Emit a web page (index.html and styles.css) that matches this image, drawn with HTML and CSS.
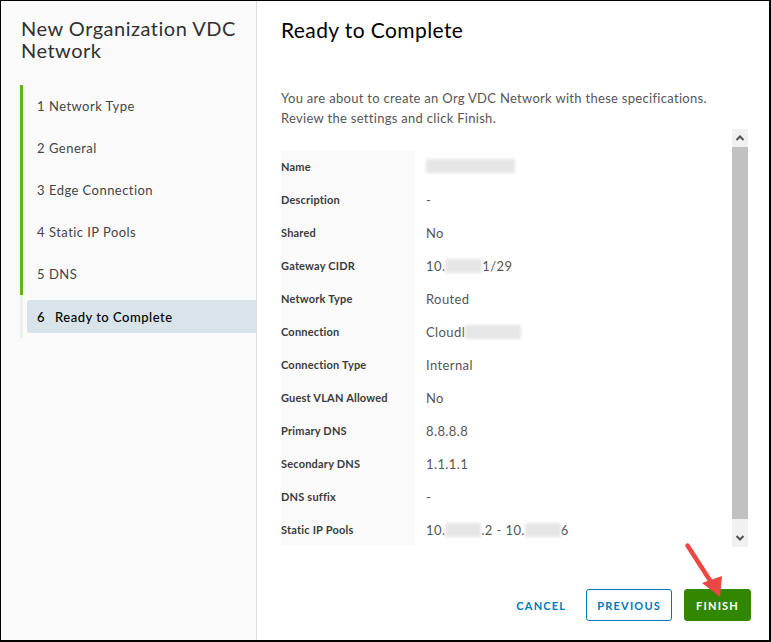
FILE: index.html
```html
<!DOCTYPE html>
<html>
<head>
<meta charset="utf-8">
<link rel="stylesheet" href="styles.css">
</head>
<body>
<div class="frame">
  <aside class="sidebar">
    <h1 class="wizard-title">New Organization VDC Network</h1>
    <ol class="steps">
      <li class="step done"><span class="num">1</span>Network Type</li>
      <li class="step done"><span class="num">2</span>General</li>
      <li class="step done"><span class="num">3</span>Edge Connection</li>
      <li class="step done"><span class="num">4</span>Static IP Pools</li>
      <li class="step done"><span class="num">5</span>DNS</li>
      <li class="step active"><div class="step-inner"><span class="num">6</span>Ready to Complete</div></li>
    </ol>
  </aside>
  <main class="content">
    <h2 class="page-title">Ready to Complete</h2>
    <p class="intro">You are about to create an Org VDC Network with these specifications.<br>Review the settings and click Finish.</p>
    <div class="summary">
      <div class="summary-body">
        <dl class="specs">
          <div class="row"><dt>Name</dt><dd><span class="blur w89"></span></dd></div>
          <div class="row"><dt>Description</dt><dd>-</dd></div>
          <div class="row"><dt>Shared</dt><dd>No</dd></div>
          <div class="row"><dt>Gateway CIDR</dt><dd>10.<span class="blur w37"></span>1/29</dd></div>
          <div class="row"><dt>Network Type</dt><dd>Routed</dd></div>
          <div class="row"><dt>Connection</dt><dd>Cloudl<span class="blur w56"></span></dd></div>
          <div class="row"><dt>Connection Type</dt><dd>Internal</dd></div>
          <div class="row"><dt>Guest VLAN Allowed</dt><dd>No</dd></div>
          <div class="row"><dt>Primary DNS</dt><dd>8.8.8.8</dd></div>
          <div class="row"><dt>Secondary DNS</dt><dd>1.1.1.1</dd></div>
          <div class="row"><dt>DNS suffix</dt><dd>-</dd></div>
          <div class="row"><dt>Static IP Pools</dt><dd>10.<span class="blur w36"></span>.2 - 10.<span class="blur w36"></span>6</dd></div>
        </dl>
      </div>
      <div class="scrollbar">
        <div class="sb-btn"><svg width="16" height="18" viewBox="0 0 16 18"><path d="M4.5 11 L8 7.5 L11.5 11" fill="none" stroke="#505050" stroke-width="2"/></svg></div>
        <div class="sb-track"><div class="sb-thumb"></div></div>
        <div class="sb-btn"><svg width="16" height="18" viewBox="0 0 16 18"><path d="M4.5 7 L8 10.5 L11.5 7" fill="none" stroke="#505050" stroke-width="2"/></svg></div>
      </div>
    </div>
    <footer class="actions">
      <button class="btn btn-link">CANCEL</button>
      <button class="btn btn-outline">PREVIOUS</button>
      <button class="btn btn-success">FINISH</button>
    </footer>
  </main>
  <svg class="callout" width="771" height="642" viewBox="0 0 771 642">
    <line x1="687.5" y1="545.5" x2="711" y2="582" stroke="#ec4843" stroke-width="4.5" stroke-linecap="round"/>
    <polygon points="702,583 722,576 720,597" fill="#ec4843"/>
  </svg>
</div>
</body>
</html>
```
FILE: styles.css
```css
* { box-sizing: border-box; }
html, body { margin: 0; padding: 0; background: #fff; }
body { font-family: "Lato", "Noto Sans", sans-serif; color: #565656; }

.frame {
  position: relative;
  width: 771px;
  height: 642px;
  border-top: 1px solid #000;
  border-left: 1px solid #000;
  border-right: 2px solid #000;
  border-bottom: 2px solid #000;
  display: flex;
  overflow: hidden;
}

.sidebar {
  width: 256px;
  flex: none;
  background: #fafafa;
  border-right: 1px solid #ddd;
  padding: 16px 0 0 19px;
}

.wizard-title {
  margin: 0;
  font-size: 20px;
  font-weight: 400;
  line-height: 22px;
  letter-spacing: 0.5px;
  color: #313131;
  padding-left: 1px;
}

.steps {
  list-style: none;
  margin: 24px 0 0 0;
  padding: 0;
}

.step {
  height: 42px;
  border-left: 3px solid #60b515;
  display: flex;
  align-items: center;
  padding-left: 14px;
  font-size: 13px;
  letter-spacing: 0.45px;
  color: #454545;
}
.step .num { margin-right: 4px; }

.step.active {
  border-left-color: #eee;
  padding: 5px 0 5px 4px;
  align-items: stretch;
  height: 43px;
}
.step-inner {
  flex: 1;
  background: #d9e4ea;
  border-radius: 3px 0 0 3px;
  display: flex;
  align-items: center;
  padding-left: 10px;
  color: #000;
  font-weight: 500;
  letter-spacing: 0.5px;
}
.step-inner .num { margin-right: 10px; }

.content {
  flex: 1;
  padding: 16px 18px 0 24px;
  display: flex;
  flex-direction: column;
}

.page-title {
  margin: 0;
  font-size: 21px;
  font-weight: 400;
  line-height: 26px;
  letter-spacing: 0.4px;
  color: #000;
}

.intro {
  margin: 45px 0 0 0;
  font-size: 13px;
  line-height: 20px;
  letter-spacing: 0.3px;
  color: #565656;
}

.summary {
  margin-top: 1px;
  margin-right: 3px;
  height: 418px;
  display: flex;
}

.summary-body {
  flex: 1;
  padding-top: 21px;
  overflow: hidden;
}

.specs { margin: 0; }
.specs .row {
  display: flex;
  height: 33px;
}
.specs dt {
  width: 134px;
  flex: none;
  background: #fafafa;
  font-size: 11px;
  font-weight: 700;
  letter-spacing: 0.2px;
  color: #3a3a3a;
  display: flex;
  align-items: center;
}
.specs dd {
  margin: 0;
  padding: 1px 0 0 11px;
  font-size: 13px;
  letter-spacing: 0.4px;
  color: #565656;
  display: flex;
  align-items: center;
}

.blur {
  display: inline-block;
  height: 14px;
  background: #e6e6e6;
  filter: blur(1.5px);
}
.w89 { width: 89px; margin-top: -2px; }
.w37 { width: 37px; }
.w56 { width: 56px; }
.w36 { width: 36px; }

.scrollbar {
  width: 16px;
  flex: none;
  display: flex;
  flex-direction: column;
  background: #f1f1f1;
}
.sb-btn { height: 18px; flex: none; display: flex; }
.sb-track { flex: 1; padding-bottom: 10px; }
.sb-thumb { height: 100%; background: #c1c1c1; }

.actions {
  margin-top: 42px;
  display: flex;
  justify-content: flex-end;
  align-items: center;
  gap: 12px;
}

.btn {
  font-family: "Lato", "Noto Sans", sans-serif;
  font-size: 11px;
  font-weight: 700;
  letter-spacing: 1.2px;
  height: 32px;
  border-radius: 3px;
  padding: 0 11px;
  cursor: pointer;
}
.btn-link {
  border: none;
  background: none;
  color: #0079b8;
  padding-right: 8px;
}
.btn-outline {
  border: 1px solid #0079b8;
  background: #fff;
  color: #0079b8;
  padding: 0 10px;
}
.btn-success {
  border: 1px solid #318700;
  background: #318700;
  color: #fff;
}

.callout {
  position: absolute;
  left: -1px;
  top: -1px;
  pointer-events: none;
}
```
